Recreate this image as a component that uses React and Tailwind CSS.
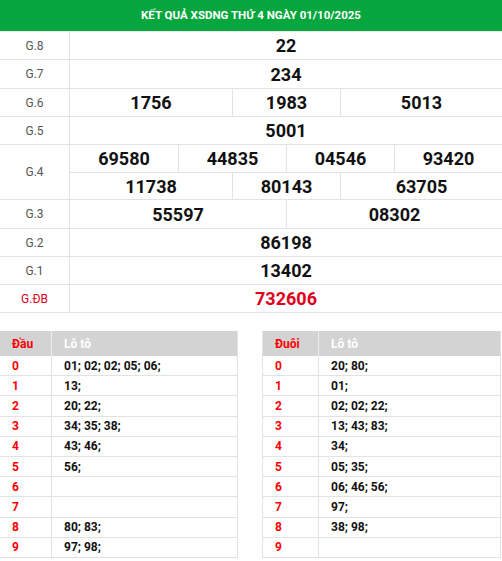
import React from "react";

const prizes = [
  { label: "G.8", rows: [[{ n: "22", span: "col-span-8" }]] },
  { label: "G.7", rows: [[{ n: "234", span: "col-span-8" }]], tall: true },
  {
    label: "G.6",
    rows: [
      [
        { n: "1756", span: "col-span-3" },
        { n: "1983", span: "col-span-2" },
        { n: "5013", span: "col-span-3" },
      ],
    ],
  },
  { label: "G.5", rows: [[{ n: "5001", span: "col-span-8" }]] },
  {
    label: "G.4",
    rows: [
      [
        { n: "69580", span: "col-span-2" },
        { n: "44835", span: "col-span-2" },
        { n: "04546", span: "col-span-2" },
        { n: "93420", span: "col-span-2" },
      ],
      [
        { n: "11738", span: "col-span-3" },
        { n: "80143", span: "col-span-2" },
        { n: "63705", span: "col-span-3" },
      ],
    ],
  },
  {
    label: "G.3",
    rows: [
      [
        { n: "55597", span: "col-span-4" },
        { n: "08302", span: "col-span-4" },
      ],
    ],
    tall: true,
  },
  { label: "G.2", rows: [[{ n: "86198", span: "col-span-8" }]] },
  { label: "G.1", rows: [[{ n: "13402", span: "col-span-8" }]] },
  { label: "G.ĐB", rows: [[{ n: "732606", span: "col-span-8" }]], special: true },
];

const dau = ["01; 02; 02; 05; 06;", "13;", "20; 22;", "34; 35; 38;", "43; 46;", "56;", "", "", "80; 83;", "97; 98;"];
const duoi = ["20; 80;", "01;", "02; 02; 22;", "13; 43; 83;", "34;", "05; 35;", "06; 46; 56;", "97;", "38; 98;", ""];

function LotoTable({ title, data, firstCol }) {
  return (
    <div className="w-[239px] shrink-0 border-x border-[#e2e2e2]">
      <div className="flex h-[25px] bg-[#d3d3d3] text-[12px] font-bold">
        <div className={`${firstCol} flex items-center pl-3 text-[#ff0000] border-r border-[#ececec]`}>{title}</div>
        <div className="flex items-center pl-[12px] text-white">Lô tô</div>
      </div>
      {data.map((v, i) => (
        <div key={i} className="flex h-[20.2px] border-b border-[#e2e2e2] text-[12px] font-bold">
          <div className={`${firstCol} flex items-center pl-3 text-[#ff0000] border-r border-[#e2e2e2]`}>{i}</div>
          <div className="flex items-center pl-[12px] text-[#111]">{v}</div>
        </div>
      ))}
    </div>
  );
}

export default function App() {
  return (
    <div className="w-[502px] bg-white font-['Roboto',sans-serif]">
      <div className="flex h-[32px] items-center justify-center bg-[#04a63d] text-[11.5px] font-bold text-white border-b border-[#e8e8e8]">
        KẾT QUẢ XSDNG THỨ 4 NGÀY 01/10/2025
      </div>
      {prizes.map((p) => (
        <div key={p.label} className="flex border-b border-[#e2e2e2]">
          <div
            className={`flex w-[70px] shrink-0 items-center justify-center border-r border-[#e2e2e2] text-[12px] ${
              p.special ? "text-[#e0001b]" : "text-[#555]"
            }`}
          >
            {p.label}
          </div>
          <div className="flex-1">
            {p.rows.map((r, ri) => (
              <div
                key={ri}
                className={`grid grid-cols-8 ${p.tall ? "h-[28px]" : "h-[27px]"} ${
                  ri > 0 ? "border-t border-[#e2e2e2]" : ""
                }`}
              >
                {r.map((c, ci) => (
                  <div
                    key={ci}
                    className={`${c.span} flex items-center justify-center text-[18px] font-bold ${
                      ci > 0 ? "border-l border-[#e2e2e2]" : ""
                    } ${p.special ? "text-[#e0001b]" : "text-[#111]"}`}
                  >
                    {c.n}
                  </div>
                ))}
              </div>
            ))}
          </div>
        </div>
      ))}
      <div className="mt-[18px] flex gap-[24px] ml-[-1px]">
        <LotoTable title="Đầu" data={dau} firstCol="w-[52px]" />
        <LotoTable title="Đuôi" data={duoi} firstCol="w-[56px]" />
      </div>
    </div>
  );
}
